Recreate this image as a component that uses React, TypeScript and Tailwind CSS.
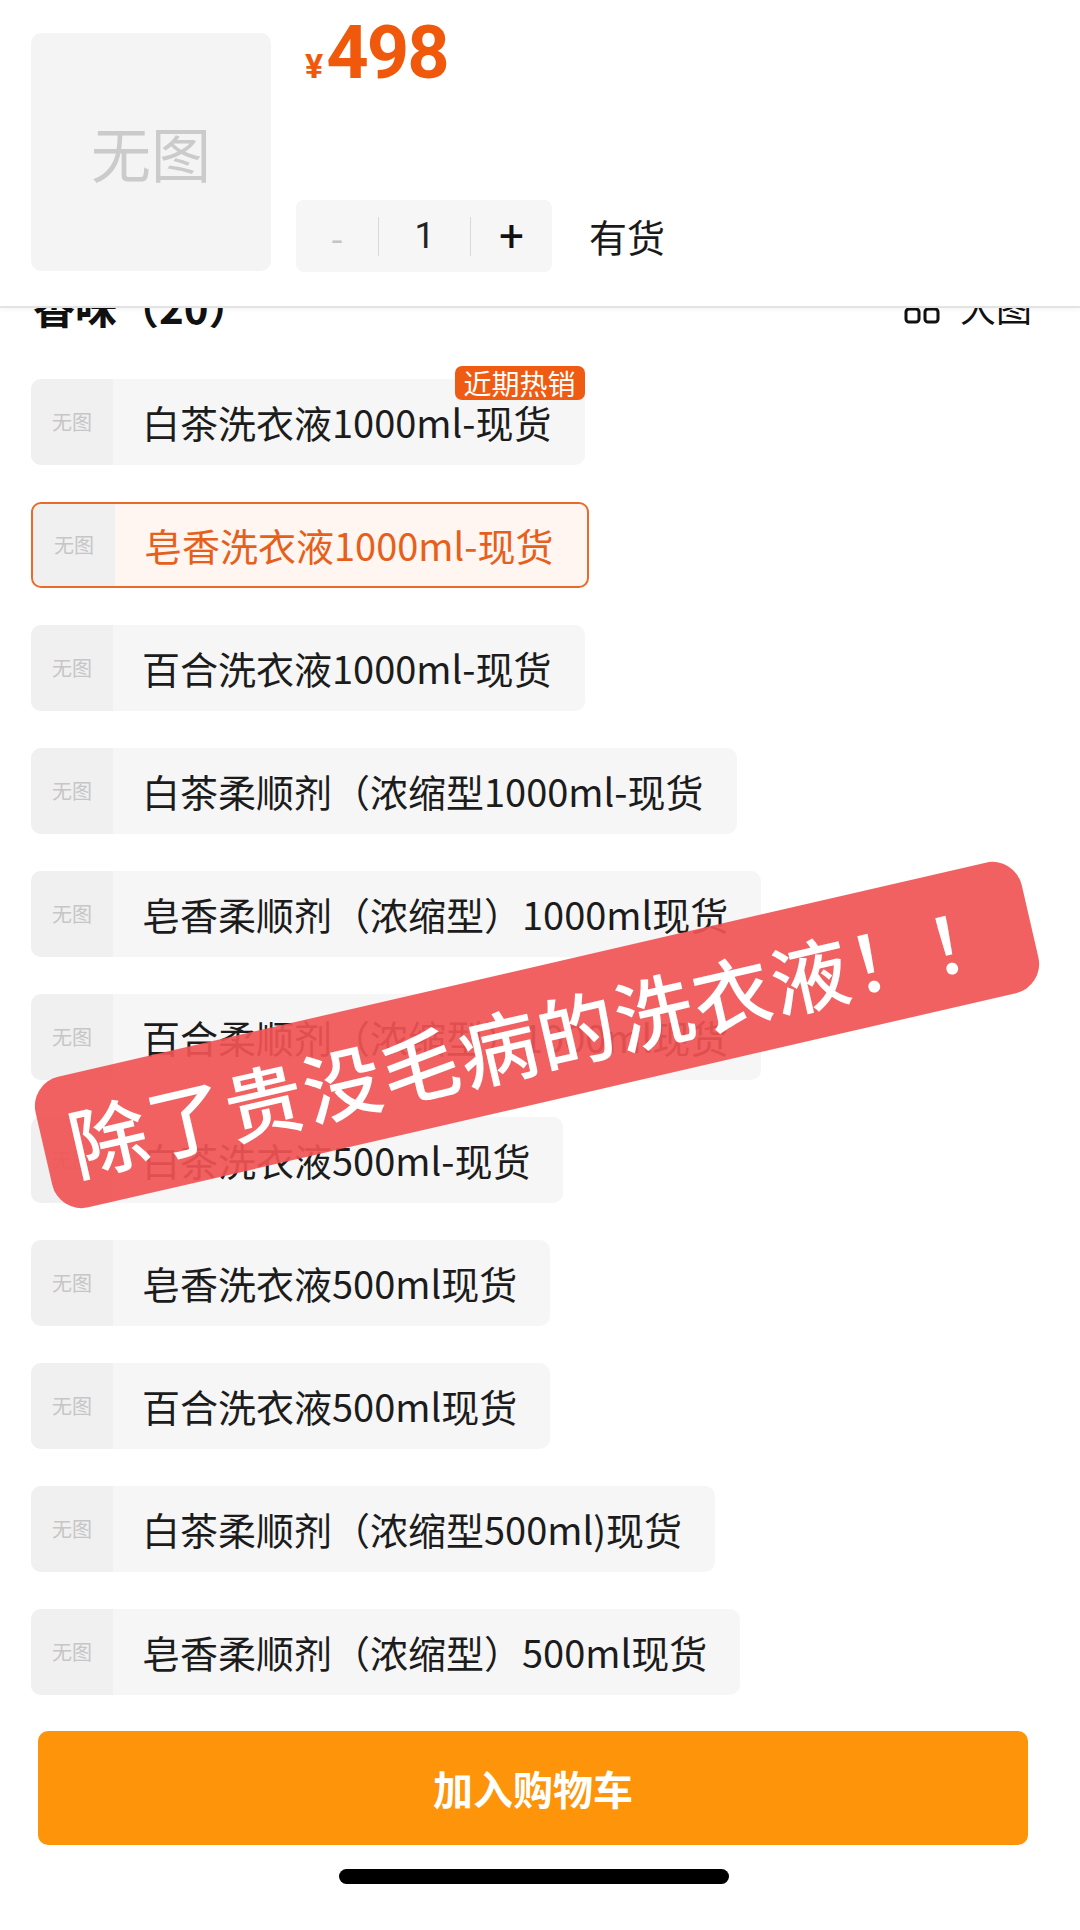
import React from 'react';

interface SkuOption {
  name: string;
  hot?: boolean;
  selected?: boolean;
}

const SKUS: SkuOption[] = [
  { name: '白茶洗衣液1000ml-现货', hot: true },
  { name: '皂香洗衣液1000ml-现货', selected: true },
  { name: '百合洗衣液1000ml-现货' },
  { name: '白茶柔顺剂（浓缩型1000ml-现货' },
  { name: '皂香柔顺剂（浓缩型）1000ml现货' },
  { name: '百合柔顺剂（浓缩型）1000ml现货' },
  { name: '白茶洗衣液500ml-现货' },
  { name: '皂香洗衣液500ml现货' },
  { name: '百合洗衣液500ml现货' },
  { name: '白茶柔顺剂（浓缩型500ml)现货' },
  { name: '皂香柔顺剂（浓缩型）500ml现货' },
];

const FONT = "font-['Noto_Sans_CJK_SC',_'Noto_Sans',_sans-serif]";

function GridIcon() {
  return (
    <svg width="36" height="36" viewBox="0 0 36 36" fill="none" stroke="#111" strokeWidth="3">
      <rect x="2" y="2" width="13" height="13" rx="3" />
      <rect x="21" y="2" width="13" height="13" rx="3" />
      <rect x="2" y="21" width="13" height="13" rx="3" />
      <rect x="21" y="21" width="13" height="13" rx="3" />
    </svg>
  );
}

function SkuItem({ sku }: { sku: SkuOption }) {
  return (
    <div
      className={
        sku.selected
          ? 'relative flex h-[86px] items-stretch rounded-[10px] border-2 border-[#ea6a2c] bg-[#fff6f1]'
          : 'relative flex h-[86px] items-stretch rounded-[10px] bg-[#f6f6f6]'
      }
    >
      <div className="flex w-[82px] shrink-0 items-center justify-center rounded-l-[10px] bg-[#f0f0f0]">
        <span className="text-[20px] leading-none text-[#c6c6c6]">无图</span>
      </div>
      <div
        className={
          sku.selected
            ? 'flex items-center pl-[29px] pr-[33px] text-[38px] leading-none text-[#e6601c]'
            : 'flex items-center pl-[29px] pr-[33px] text-[38px] leading-none text-[#1c1c1c]'
        }
      >
        {sku.name}
      </div>
      {sku.hot && (
        <div className="absolute right-0 top-[-13px] rounded-[7px] bg-[#ef5b12] px-[9px] py-[2px] text-[28px] leading-[30px] text-white">
          近期热销
        </div>
      )}
    </div>
  );
}

export default function App() {
  return (
    <div className={`${FONT} relative flex h-[1930px] w-[1080px] flex-col overflow-hidden bg-white`}>
      {/* sticky product header */}
      <div className="relative z-10 flex h-[308px] shrink-0 border-b-2 border-[#e3e3e3] bg-white shadow-[0_2px_4px_rgba(0,0,0,0.04)]">
        <div className="ml-[31px] mt-[33px] flex h-[238px] w-[240px] items-center justify-center rounded-[10px] bg-[#f4f4f4]">
          <span className="text-[60px] leading-none text-[#cbcbcb]">无图</span>
        </div>
        <div className="ml-[25px] flex flex-col pt-[16px]">
          <div className="flex h-[72px] items-baseline pl-[9px] font-['Roboto',_sans-serif] font-bold text-[#f0580c]">
            <span className="text-[34px] leading-none">¥</span>
            <span className="ml-[3px] text-[74px] leading-none tracking-[-2px]">498</span>
          </div>
          <div className="mt-[112px] flex items-center">
            <div className="flex h-[72px] w-[256px] items-center rounded-[8px] bg-[#f6f6f6]">
              <div className="flex w-[82px] items-center justify-center text-[36px] text-[#c4c4c4]">-</div>
              <div className="h-[39px] w-px bg-[#d8d8d8]" />
              <div className="flex w-[91px] items-center justify-center font-['Roboto',_sans-serif] text-[36px] text-[#222]">1</div>
              <div className="h-[39px] w-px bg-[#d8d8d8]" />
              <div className="flex w-[81px] items-center justify-center font-['Roboto',_sans-serif] text-[44px] text-[#111]">+</div>
            </div>
            <span className="ml-[37px] text-[38px] leading-none text-[#1a1a1a]">有货</span>
          </div>
        </div>
      </div>

      {/* scrolling options */}
      <div className="flex min-h-0 flex-1 flex-col overflow-hidden">
        <div className="mt-[-23px] flex items-center justify-between pl-[33px] pr-[48px]">
          <span className="text-[42px] font-bold leading-none text-[#111]">香味（20）</span>
          <div className="flex items-center gap-[20px]">
            <GridIcon />
            <span className="text-[36px] leading-none text-[#111]">大图</span>
          </div>
        </div>
        <div className="mt-[52px] flex flex-col items-start gap-[37px] px-[31px]">
          {SKUS.map((sku) => (
            <SkuItem key={sku.name} sku={sku} />
          ))}
        </div>
      </div>

      {/* bottom action */}
      <div className="flex shrink-0 flex-col items-start pb-[46px]">
        <button className="ml-[38px] flex h-[114px] w-[990px] items-center justify-center rounded-[10px] bg-[#fd940a] text-[40px] font-bold text-white">
          加入购物车
        </button>
        <div className="ml-[339px] mt-[24px] h-[15px] w-[390px] rounded-full bg-black" />
      </div>

      {/* sticker overlay */}
      <div className="absolute left-[31px] top-[968px] z-20 flex h-[134px] w-[1012px] rotate-[-13deg] items-center justify-center rounded-[30px] bg-[rgba(240,84,84,0.92)]">
        <span className="text-[78px] font-medium leading-none tracking-[2px] text-white">除了贵没毛病的洗衣液！！</span>
      </div>
    </div>
  );
}
